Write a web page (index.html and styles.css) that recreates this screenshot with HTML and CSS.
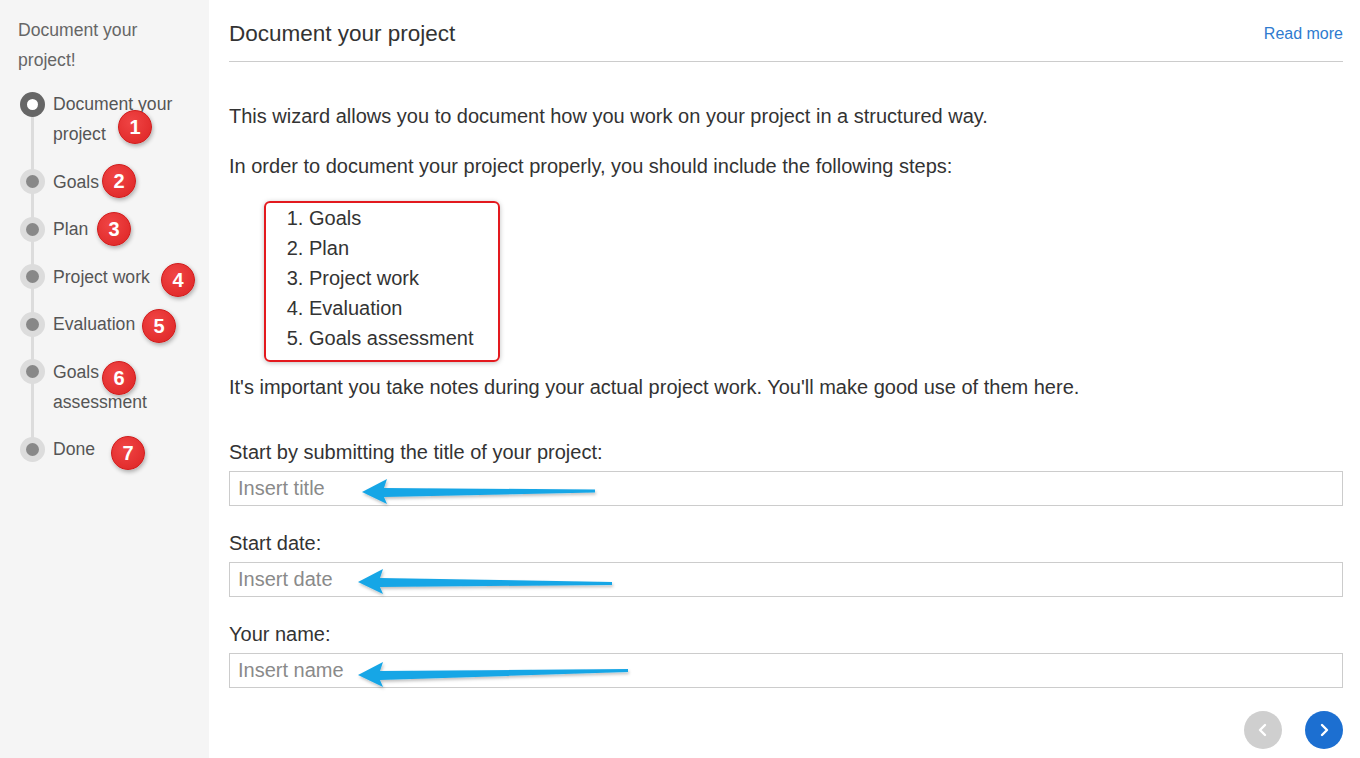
FILE: index.html
```html
<html charset="utf-8">
  <head>
    <title>Document your project</title>
    <link rel="stylesheet" href="styles.css">
  </head>
  <body>
    <div class="layout">
      <div class="sidebar">
        <p class="sidebar-title">Document your project!</p>
        <ul class="steps">
          <li class="step active"><span class="marker"></span><span class="step-label">Document your project</span></li>
          <li class="step"><span class="marker"></span><span class="step-label">Goals</span></li>
          <li class="step"><span class="marker"></span><span class="step-label">Plan</span></li>
          <li class="step"><span class="marker"></span><span class="step-label">Project work</span></li>
          <li class="step"><span class="marker"></span><span class="step-label">Evaluation</span></li>
          <li class="step"><span class="marker"></span><span class="step-label">Goals assessment</span></li>
          <li class="step"><span class="marker"></span><span class="step-label">Done</span></li>
        </ul>
      </div>
      <div class="main">
        <div class="header">
          <h1>Document your project</h1>
          <a href="#" class="read-more">Read more</a>
        </div>
        <p class="intro">This wizard allows you to document how you work on your project in a structured way.</p>
        <p>In order to document your project properly, you should include the following steps:</p>
        <div class="steps-box">
          <ol>
            <li>Goals</li>
            <li>Plan</li>
            <li>Project work</li>
            <li>Evaluation</li>
            <li>Goals assessment</li>
          </ol>
        </div>
        <p>It's important you take notes during your actual project work. You'll make good use of them here.</p>
        <div class="form">
          <label class="field">
            <span>Start by submitting the title of your project:</span>
            <input type="text" placeholder="Insert title">
          </label>
          <label class="field">
            <span>Start date:</span>
            <input type="text" placeholder="Insert date">
          </label>
          <label class="field">
            <span>Your name:</span>
            <input type="text" placeholder="Insert name">
          </label>
        </div>
        <div class="nav">
          <a href="#" class="nav-btn prev">
            <svg width="14" height="14" viewBox="0 0 14 14"><path d="M9 2 L4 7 L9 12" /></svg>
          </a>
          <a href="#" class="nav-btn next">
            <svg width="14" height="14" viewBox="0 0 14 14"><path d="M5 2 L10 7 L5 12" /></svg>
          </a>
        </div>
      </div>
    </div>

    <!-- annotation layer: numbered badges and pointer arrows -->
    <div class="badge" style="left: 118px; top: 110px;">1</div>
    <div class="badge" style="left: 102px; top: 164px;">2</div>
    <div class="badge" style="left: 97px; top: 212px;">3</div>
    <div class="badge" style="left: 161px; top: 263px;">4</div>
    <div class="badge" style="left: 142px; top: 309px;">5</div>
    <div class="badge" style="left: 102px; top: 361px;">6</div>
    <div class="badge" style="left: 111px; top: 436px;">7</div>
    <svg class="arrows" width="1360" height="758" viewBox="0 0 1360 758">
      <defs>
        <filter id="soft" x="-5%" y="-50%" width="110%" height="200%">
          <feDropShadow dx="1" dy="2" stdDeviation="1.5" flood-color="#000" flood-opacity="0.25" />
        </filter>
      </defs>
      <polygon filter="url(#soft)" points="362,492 387,479 384,488 595,489.5 595,492.5 384,497 387,504" />
      <polygon filter="url(#soft)" points="358,582 383,569 380,578 612,582 612,585 380,587 383,594" />
      <polygon filter="url(#soft)" points="358,675 383,662 380,671 628,669 628,672 380,680 383,687" />
    </svg>
  </body>
</html>
```

FILE: styles.css
```css
body {
  margin: 0;
  font-family: "Liberation Sans", Arial, sans-serif;
  color: #333;
  background: #fff;
}
.layout { display: flex; height: 758px; }

/* sidebar */
.sidebar {
  width: 191px;
  flex: none;
  background-color: #f5f5f5;
  padding: 15px 0 0 18px;
}
.sidebar-title {
  margin: 0 0 14px 0;
  font-size: 17.6px;
  line-height: 30px;
  color: #666;
  width: 160px;
}
.steps {
  list-style: none;
  margin: 0;
  padding: 0;
  position: relative;
  display: flex;
  flex-direction: column;
  gap: 17.5px;
}
.steps:before {
  content: '';
  position: absolute;
  left: 12.5px;
  top: 15px;
  bottom: 15px;
  width: 3px;
  background-color: #dcdcdc;
}
.step { display: flex; gap: 8px; position: relative; }
.step-label {
  font-size: 17.6px;
  line-height: 30px;
  color: #555;
  width: 130px;
}
.marker {
  flex: none;
  width: 25px;
  height: 25px;
  margin: 2.5px 0 0 2px;
  border-radius: 50%;
  background-color: #dcdcdc;
  display: flex;
  align-items: center;
  justify-content: center;
}
.marker:after {
  content: '';
  width: 13px;
  height: 13px;
  border-radius: 50%;
  background-color: #888;
}
.step.active .marker { background-color: #666; }
.step.active .marker:after { width: 11px; height: 11px; background-color: #fff; }

/* main column */
.main {
  flex: 1;
  padding: 0 17px 0 20px;
  font-size: 20px;
  line-height: 30px;
}
.header {
  display: flex;
  justify-content: space-between;
  align-items: center;
  height: 54px;
  padding-top: 7px;
  border-bottom: 1px solid #ccc;
}
.header h1 {
  margin: 0;
  font-size: 22.5px;
  font-weight: normal;
  color: #333;
}
.read-more { font-size: 16px; color: #2f7bcf; text-decoration: none; }

.main p { margin: 0 0 20px 0; }
.main p.intro { margin-top: 39px; }

.steps-box {
  width: 232px;
  margin: 0 0 10px 35px;
  border: 2px solid #e3191e;
  border-radius: 6px;
  box-shadow: 0 1px 5px rgba(0, 0, 0, 0.25);
}
.steps-box ol { margin: 0; padding: 0 0 7px 43px; }

.form { margin-top: 35px; display: flex; flex-direction: column; gap: 22px; }
.field { display: flex; flex-direction: column; gap: 4px; }
.field input {
  box-sizing: border-box;
  height: 35px;
  border: 1px solid #ccc;
  padding: 0 8px;
  font-family: "Liberation Sans", Arial, sans-serif;
  font-size: 20px;
  color: #333;
  outline: none;
}
.field input::placeholder { color: #8a8a8a; }

.nav { display: flex; justify-content: flex-end; gap: 23px; margin-top: 23px; }
.nav-btn {
  width: 38px;
  height: 38px;
  border-radius: 50%;
  display: flex;
  align-items: center;
  justify-content: center;
}
.nav-btn path { fill: none; stroke: #fff; stroke-width: 2.4; stroke-linecap: round; stroke-linejoin: round; }
.nav-btn.prev { background-color: #cfcfcf; }
.nav-btn.next { background-color: #1c6fd1; }

/* annotations */
.badge {
  position: absolute;
  width: 32px;
  height: 32px;
  border-radius: 50%;
  border: 1.5px solid #cf1b1b;
  background: radial-gradient(circle at 40% 35%, #f04545, #dd2424);
  box-shadow: 1px 2px 4px rgba(0, 0, 0, 0.3);
  color: #fff;
  font-size: 20px;
  font-weight: bold;
  line-height: 32px;
  text-align: center;
}
.arrows { position: absolute; left: 0; top: 0; pointer-events: none; }
.arrows polygon { fill: #18a6e6; }
```
